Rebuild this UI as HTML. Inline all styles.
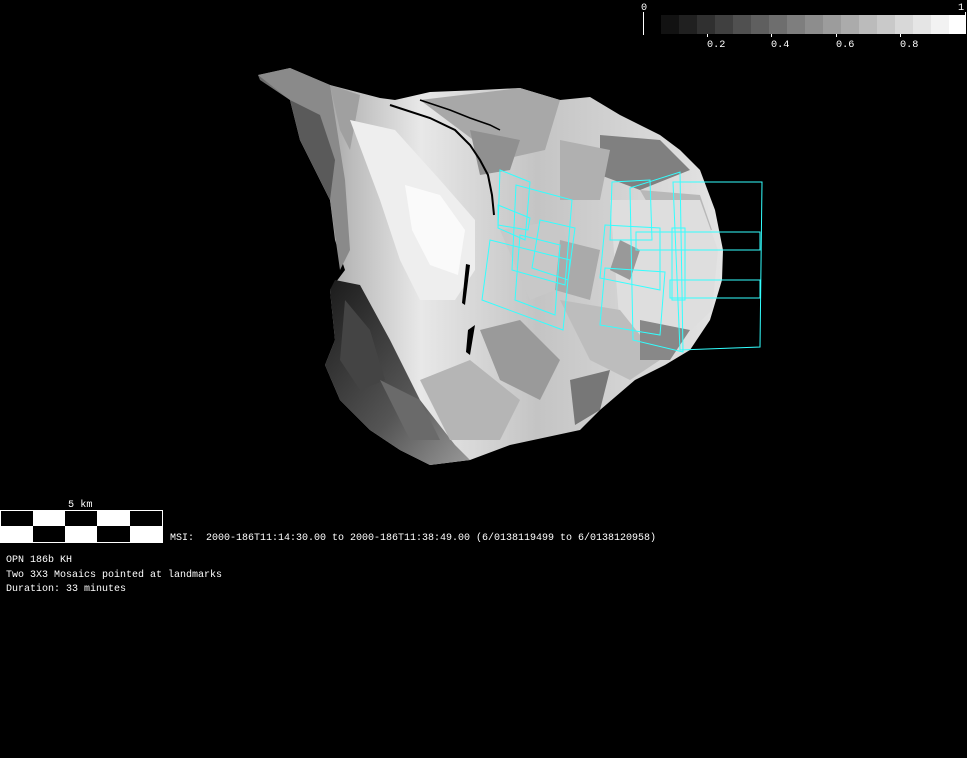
<!DOCTYPE html>
<html><head><meta charset="utf-8"><style>
html,body{margin:0;padding:0;background:#000;width:967px;height:758px;overflow:hidden}
svg{position:absolute;left:0;top:0}
text{font-family:"Liberation Mono","DejaVu Sans Mono",monospace;fill:#fff;font-size:10.2px}
</style></head><body>
<svg width="967" height="758" viewBox="0 0 967 758" xmlns="http://www.w3.org/2000/svg">
<defs>
<linearGradient id="g1" x1="0" y1="0" x2="1" y2="0">
<stop offset="0" stop-color="#666"/><stop offset="0.2" stop-color="#bbb"/><stop offset="0.35" stop-color="#e8e8e8"/><stop offset="0.6" stop-color="#c4c4c4"/><stop offset="1" stop-color="#e4e4e4"/>
</linearGradient>
<linearGradient id="g2" x1="0" y1="0" x2="1" y2="1">
<stop offset="0" stop-color="#1a1a1a"/><stop offset="0.6" stop-color="#555"/><stop offset="1" stop-color="#999"/>
</linearGradient>
</defs>
<polygon fill="url(#g1)" points="258,75 290,68 330,85 380,98 395,100 430,92 480,90 520,88 560,100 590,97 620,115 660,135 680,150 700,170 715,210 723,250 722,280 710,320 690,350 665,365 635,380 600,410 580,430 510,445 470,460 430,465 400,450 370,430 340,400 325,365 335,340 330,290 345,270 335,240 330,200 300,140 290,100 260,80"/>
<polygon fill="#8a8a8a" points="258,75 290,68 330,85 345,180 350,250 340,270 330,200 300,140 290,100"/>
<polygon fill="#5a5a5a" points="290,100 320,115 335,160 330,200 300,140"/>
<polygon fill="#a0a0a0" points="330,85 360,95 350,150 340,130"/>
<polygon fill="url(#g2)" points="335,280 360,285 390,340 420,400 455,445 470,460 430,465 400,450 370,430 340,400 325,365 335,340 330,290"/>
<polygon fill="#444" points="345,300 370,330 385,380 360,390 340,360"/>
<polygon fill="#6a6a6a" points="380,380 420,400 440,440 410,440"/>
<polygon fill="#eeeeee" points="350,120 395,130 440,180 475,220 475,270 455,300 420,300 400,260 380,200"/>
<polygon fill="#fafafa" points="405,185 440,195 465,230 458,275 430,265 412,230"/>
<polygon fill="#a8a8a8" points="420,100 520,88 560,100 545,150 500,160 460,130"/>
<polygon fill="#808080" points="600,135 660,140 690,170 640,190 600,175"/>
<polygon fill="#b0b0b0" points="560,140 610,150 600,200 560,200"/>
<polygon fill="#909090" points="470,130 520,140 510,170 480,175"/>
<polygon fill="#b8b8b8" points="640,190 700,195 712,230 660,225"/>
<polygon fill="#dedede" points="610,200 700,200 718,250 712,310 680,340 620,330"/>
<polygon fill="#bdbdbd" points="560,300 620,310 660,360 630,380 590,360"/>
<polygon fill="#9a9a9a" points="480,330 520,320 560,360 540,400 500,380"/>
<polygon fill="#b5b5b5" points="420,380 470,360 520,400 500,440 450,440"/>
<polygon fill="#777" points="570,380 610,370 600,410 575,425"/>
<polygon fill="#c8c8c8" points="500,230 560,220 580,280 530,300"/>
<polygon fill="#aaa" points="560,240 600,250 590,300 555,290"/>
<polygon fill="#888" points="640,320 690,330 670,360 640,360"/>
<polygon fill="#999" points="620,240 640,250 630,280 610,270"/>
<polyline fill="none" stroke="#000" stroke-width="2" points="390,105 430,118 455,130 470,145 480,160 488,175 492,195 494,215"/>
<polyline fill="none" stroke="#000" stroke-width="1.5" points="420,100 450,110 470,118 490,125 500,130"/>
<polygon fill="#000" points="466,264 470,265 465,305 462,303"/>
<polygon fill="#000" points="468,330 475,325 470,355 466,352"/>
<g fill="none" stroke="#3ff" stroke-width="1">
<polygon points="500,170 530,182 525,240 498,228"/>
<polygon points="516,185 572,200 565,285 512,270"/>
<polygon points="490,240 570,260 563,330 482,300"/>
<polygon points="520,235 560,245 555,315 515,300"/>
<polygon points="498,205 530,218 528,230 498,225"/>
<polygon points="540,220 575,228 568,280 532,268"/>
<polygon points="612,182 650,180 652,240 610,240"/>
<polygon points="630,188 680,172 683,352 633,340"/>
<polygon points="673,182 762,182 760,347 680,350"/>
<polygon points="605,225 660,228 660,290 600,278"/>
<polygon points="636,232 760,232 760,250 636,250"/>
<polygon points="605,268 665,272 660,335 600,325"/>
<polygon points="670,280 760,280 760,298 670,298"/>
<polygon points="672,228 685,228 685,300 672,300"/>
</g>
<g>
<rect x="661" y="15" width="18" height="19" fill="#121212"/>
<rect x="679" y="15" width="18" height="19" fill="#202020"/>
<rect x="697" y="15" width="18" height="19" fill="#303030"/>
<rect x="715" y="15" width="18" height="19" fill="#404040"/>
<rect x="733" y="15" width="18" height="19" fill="#505050"/>
<rect x="751" y="15" width="18" height="19" fill="#5f5f5f"/>
<rect x="769" y="15" width="18" height="19" fill="#6e6e6e"/>
<rect x="787" y="15" width="18" height="19" fill="#7e7e7e"/>
<rect x="805" y="15" width="18" height="19" fill="#8d8d8d"/>
<rect x="823" y="15" width="18" height="19" fill="#9c9c9c"/>
<rect x="841" y="15" width="18" height="19" fill="#ababab"/>
<rect x="859" y="15" width="18" height="19" fill="#bbbbbb"/>
<rect x="877" y="15" width="18" height="19" fill="#c9c9c9"/>
<rect x="895" y="15" width="18" height="19" fill="#d8d8d8"/>
<rect x="913" y="15" width="18" height="19" fill="#e5e5e5"/>
<rect x="931" y="15" width="18" height="19" fill="#f2f2f2"/>
<rect x="949" y="15" width="17" height="19" fill="#fff"/>
<line x1="643.5" y1="12" x2="643.5" y2="35" stroke="#fff"/>
<line x1="965.5" y1="12" x2="965.5" y2="15" stroke="#fff"/>
<line x1="707.5" y1="34" x2="707.5" y2="37" stroke="#fff"/>
<line x1="771.5" y1="34" x2="771.5" y2="37" stroke="#fff"/>
<line x1="836.5" y1="34" x2="836.5" y2="37" stroke="#fff"/>
<line x1="900.5" y1="34" x2="900.5" y2="37" stroke="#fff"/>
<text x="641" y="10">0</text>
<text x="958" y="10">1</text>
<text x="707" y="47">0.2</text>
<text x="771" y="47">0.4</text>
<text x="836" y="47">0.6</text>
<text x="900" y="47">0.8</text>
</g>
<rect x="0.5" y="510.5" width="162" height="32" fill="#fff" stroke="#fff"/>
<rect x="1" y="511" width="32" height="15" fill="#000"/>
<rect x="65" y="511" width="32" height="15" fill="#000"/>
<rect x="130" y="511" width="32" height="15" fill="#000"/>
<rect x="33" y="526" width="32" height="16" fill="#000"/>
<rect x="97" y="526" width="33" height="16" fill="#000"/>
<text x="68" y="507">5 km</text>
<text x="170" y="540" xml:space="preserve" textLength="486" lengthAdjust="spacingAndGlyphs">MSI:  2000-186T11:14:30.00 to 2000-186T11:38:49.00 (6/0138119499 to 6/0138120958)</text>
<text x="6" y="562" textLength="66" lengthAdjust="spacingAndGlyphs">OPN 186b KH</text>
<text x="6" y="577" textLength="216" lengthAdjust="spacingAndGlyphs">Two 3X3 Mosaics pointed at landmarks</text>
<text x="6" y="591" textLength="120" lengthAdjust="spacingAndGlyphs">Duration: 33 minutes</text>
</svg>
</body></html>
